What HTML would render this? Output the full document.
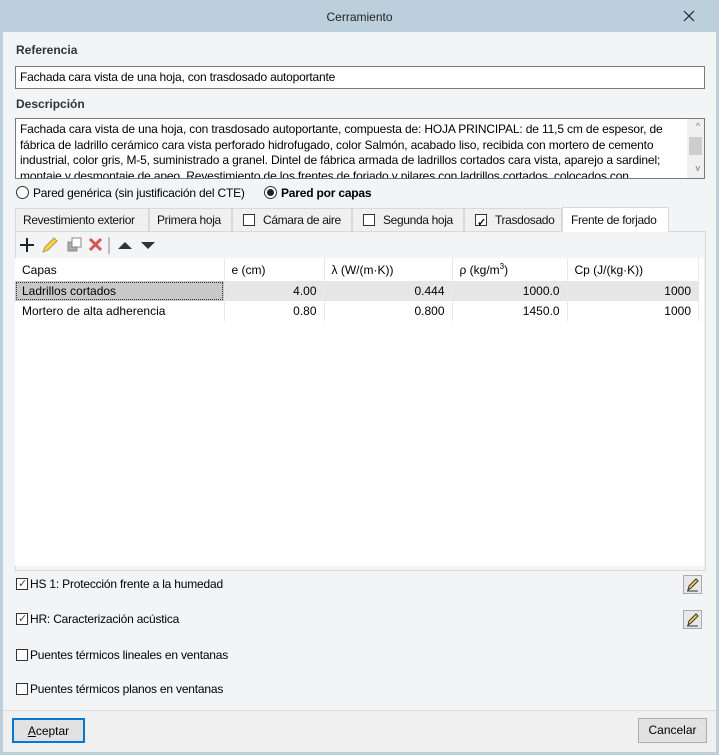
<!DOCTYPE html>
<html><head><meta charset="utf-8"><style>
*{box-sizing:border-box;margin:0;padding:0}
body{width:719px;height:755px;background:#bccfdc;font-family:"Liberation Sans",sans-serif;font-size:12px;color:#000;position:relative;overflow:hidden}
.a{position:absolute}
.body{left:3px;top:32px;width:713px;height:720px;background:#f3f4f6}
.title{left:0;top:0;width:719px;height:32px;text-align:center;line-height:34px;font-size:12px;color:#222}
.lbl{font-weight:bold;font-size:12px;color:#333}
.inp{background:#fff;border:1px solid #7a7a7a}
.tab{top:208px;height:24px;border:1px solid #d9d9d9;border-bottom:none;background:#f0f0f0;line-height:22px;font-size:12px;padding-left:7px;color:#111;letter-spacing:-0.35px;white-space:nowrap;overflow:hidden}
.cb{display:inline-block;width:12px;height:12px;border:1px solid #333;background:#fff;vertical-align:-2px;margin-right:8px;position:relative}
td{height:20px;border-right:1px solid #e8e8e8;padding:0 7px;font-size:12px;white-space:nowrap}
.r{text-align:right}
.btn{background:#e1e1e1;border:1px solid #adadad;text-align:center;line-height:22px;font-size:12px}
.chk{letter-spacing:-0.2px}
</style></head><body>
<div class="a title">Cerramiento</div>
<svg class="a" style="left:683px;top:10px" width="12" height="12"><path d="M1 1l10 10M11 1L1 11" stroke="#222" stroke-width="1.2"/></svg>
<div class="a body"></div>
<div class="a lbl" style="left:16px;top:43px">Referencia</div>
<div class="a inp" style="left:15px;top:66px;width:690px;height:23px;padding:3px 4px;font-size:12px;letter-spacing:-0.2px">Fachada cara vista de una hoja, con trasdosado autoportante</div>
<div class="a lbl" style="left:16px;top:97px">Descripción</div>
<div class="a inp" style="left:15px;top:118px;width:690px;height:61px;overflow:hidden">
<div style="position:absolute;left:4px;top:3px;width:664px;line-height:15.5px;font-size:12px;letter-spacing:-0.15px">Fachada cara vista de una hoja, con trasdosado autoportante, compuesta de: HOJA PRINCIPAL: de 11,5 cm de espesor, de fábrica de ladrillo cerámico cara vista perforado hidrofugado, color Salmón, acabado liso, recibida con mortero de cemento industrial, color gris, M-5, suministrado a granel. Dintel de fábrica armada de ladrillos cortados cara vista, aparejo a sardinel; montaje y desmontaje de apeo. Revestimiento de los frentes de forjado y pilares con ladrillos cortados, colocados con</div>
<div style="position:absolute;right:0;top:0;width:17px;height:59px;background:#f0f0f0"></div>
<div style="position:absolute;right:2px;top:18px;width:13px;height:18px;background:#cdcdcd"></div>
<div style="position:absolute;right:4px;top:2px;font-size:9px;color:#777">^</div>
<div style="position:absolute;right:4px;top:44px;font-size:9px;color:#777">v</div>
</div>
<div class="a" style="left:16px;top:186px;font-size:12px;letter-spacing:-0.2px"><span style="display:inline-block;width:13px;height:13px;border:1px solid #333;border-radius:50%;background:#fff;vertical-align:-2px;margin-right:4px"></span>Pared genérica (sin justificación del CTE)</div>
<div class="a" style="left:264px;top:186px;font-size:12px;font-weight:bold;letter-spacing:-0.2px"><span style="display:inline-block;width:13px;height:13px;border:1px solid #333;border-radius:50%;background:#fff;vertical-align:-2px;margin-right:4px;position:relative"><span style="position:absolute;left:2px;top:2px;width:7px;height:7px;border-radius:50%;background:#222"></span></span>Pared por capas</div>
<div class="a tab" style="left:15px;width:134px">Revestimiento exterior</div>
<div class="a tab" style="left:149px;width:83px">Primera hoja</div>
<div class="a tab" style="left:232px;width:120px;padding-left:10px"><span class="cb"></span>Cámara de aire</div>
<div class="a tab" style="left:352px;width:112px;padding-left:10px"><span class="cb"></span>Segunda hoja</div>
<div class="a tab" style="left:464px;width:98px;padding-left:10px"><span class="cb"><span style="position:absolute;left:1px;top:-3px;font-size:11px;font-weight:bold">✓</span></span>Trasdosado</div>
<div class="a" style="left:15px;top:231px;width:691px;height:340px;border:1px solid #d9d9d9;background:#f3f4f6"></div>
<div class="a tab" style="left:562px;width:107px;top:207px;height:25px;background:#fff;padding-left:8px;line-height:24px">Frente de forjado</div>
<svg class="a" style="left:15px;top:234px" width="150" height="22">
<path d="M5 11h14M12 4v14" stroke="#222" stroke-width="2"/>
<path d="M28 18l2-5 9-9 3 3-9 9z" fill="#f5d34a" stroke="#b89a3a"/>
<rect x="53" y="8" width="9" height="9" fill="#aaa" stroke="#888"/><rect x="57" y="4" width="9" height="9" fill="#fff" stroke="#888"/>
<path d="M75 5l11 11M86 5l-11 11" stroke="#d9534f" stroke-width="3"/>
<path d="M94 3v17" stroke="#888"/>
<path d="M103 15l7-7 7 7z" fill="#333"/><path d="M126 8l7 7 7-7z" fill="#333"/>
</svg>
<div class="a" style="left:15px;top:258px;width:689px;height:308px;background:#fff">
<table style="border-collapse:collapse;width:684px">
<tr style="height:23px"><td style="width:209px;height:23px">Capas</td><td style="width:100px">e (cm)</td><td style="width:128px">λ (W/(m·K))</td><td style="width:115px">ρ (kg/m<sup style="font-size:8px">3</sup>)</td><td>Cp (J/(kg·K))</td></tr>
<tr style="background:#e6e6e6"><td style="background:#c8c8c8;outline:1px dotted #333;outline-offset:-2px">Ladrillos cortados</td><td class="r">4.00</td><td class="r">0.444</td><td class="r">1000.0</td><td class="r">1000</td></tr>
<tr><td>Mortero de alta adherencia</td><td class="r">0.80</td><td class="r">0.800</td><td class="r">1450.0</td><td class="r">1000</td></tr>
</table></div>
<div class="a chk" style="left:16px;top:577px"><span class="cb" style="margin-right:2px"><span style="position:absolute;left:1px;top:-2px;font-size:11px;color:#444">✓</span></span>HS 1: Protección frente a la humedad</div>
<div class="a chk" style="left:16px;top:612px"><span class="cb" style="margin-right:2px"><span style="position:absolute;left:1px;top:-2px;font-size:11px;color:#444">✓</span></span>HR: Caracterización acústica</div>
<div class="a chk" style="left:16px;top:648px"><span class="cb" style="margin-right:2px"></span>Puentes térmicos lineales en ventanas</div>
<div class="a chk" style="left:16px;top:682px"><span class="cb" style="margin-right:2px"></span>Puentes térmicos planos en ventanas</div>
<svg class="a" style="left:683px;top:575px" width="20" height="20"><rect x=".5" y=".5" width="18" height="18" fill="#e8e8e8" stroke="#aaa"/><path d="M5 15l1-4 7-7 2 2-7 7z" fill="#f5d34a" stroke="#333"/><path d="M4 16h11" stroke="#333"/></svg>
<svg class="a" style="left:683px;top:610px" width="20" height="20"><rect x=".5" y=".5" width="18" height="18" fill="#e8e8e8" stroke="#aaa"/><path d="M5 15l1-4 7-7 2 2-7 7z" fill="#f5d34a" stroke="#333"/><path d="M4 16h11" stroke="#333"/></svg>
<div class="a" style="left:3px;top:710px;width:713px;height:42px;background:#f0f0f0;border-top:1px solid #ddd"></div>
<div class="a btn" style="left:12px;top:718px;width:73px;height:25px;border:2px solid #0078d7"><u>A</u>ceptar</div>
<div class="a btn" style="left:638px;top:718px;width:69px;height:25px">Cancelar</div>
</body></html>
